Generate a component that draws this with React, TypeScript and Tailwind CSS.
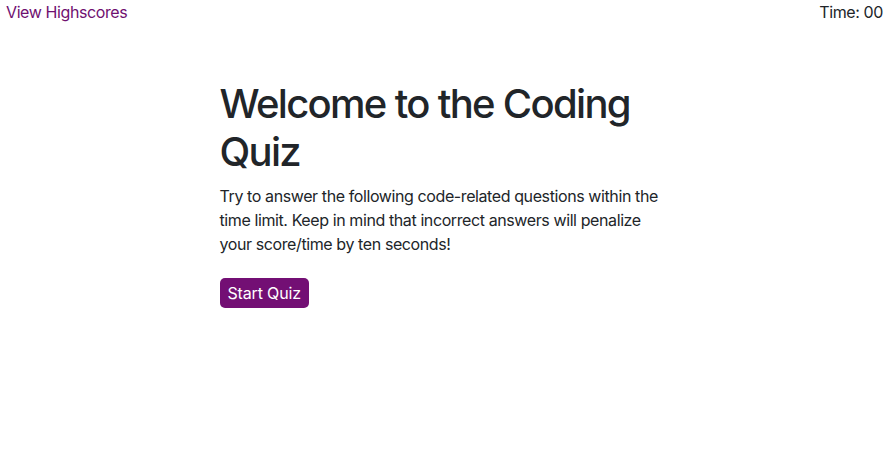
export default function App() {
  return (
    <div className="min-h-[470px] bg-white text-[#212529] tracking-[-0.025em]" style={{ fontFamily: 'Inter, "Noto Sans", sans-serif' }}>
      <header className="flex justify-between px-[6px] text-[16px] leading-[24px]">
        <a href="#" className="text-[#6f1070]">View Highscores</a>
        <span>Time: 00</span>
      </header>
      <main className="mx-auto mt-[56px] w-[450px]">
        <h1 className="mb-[8px] text-[40px] font-medium leading-[48px] tracking-[-0.042em]">Welcome to the Coding Quiz</h1>
        <p className="mb-[22px] text-[16px] leading-[24px]">
          Try to answer the following code-related questions within the time limit. Keep in mind that incorrect answers will penalize your score/time by ten seconds!
        </p>
        <button className="h-[30px] rounded-[5px] bg-[#730f74] px-[8px] text-[16px] tracking-[-0.01em] text-white">Start Quiz</button>
      </main>
    </div>
  );
}
